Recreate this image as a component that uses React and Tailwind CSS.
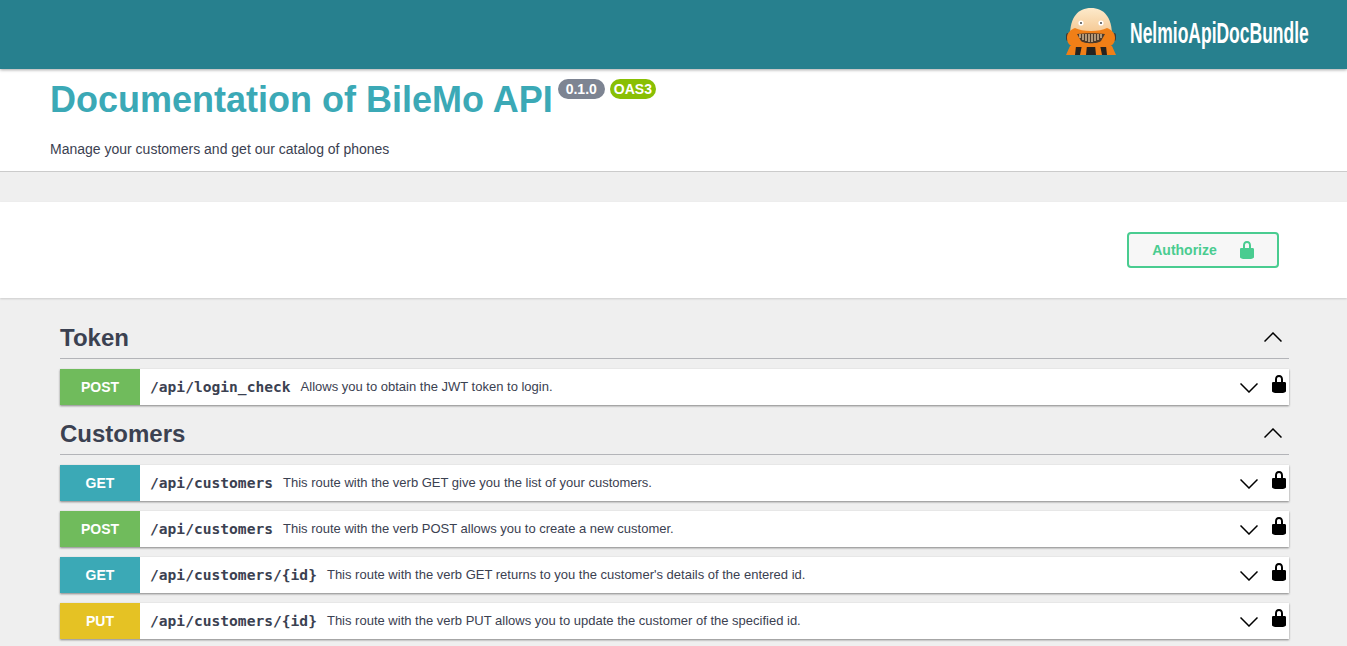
const sans = 'font-["Liberation_Sans",Arial,sans-serif]';

const methodColors = {
    GET: 'bg-[#3ba9b6]',
    POST: 'bg-[#70bb5c]',
    PUT: 'bg-[#e5c224]',
};

const tokenOps = [
    { method: 'POST', path: '/api/login_check', text: 'Allows you to obtain the JWT token to login.' },
];

const customerOps = [
    { method: 'GET', path: '/api/customers', text: 'This route with the verb GET give you the list of your customers.' },
    { method: 'POST', path: '/api/customers', text: 'This route with the verb POST allows you to create a new customer.' },
    { method: 'GET', path: '/api/customers/{id}', text: "This route with the verb GET returns to you the customer's details of the entered id." },
    { method: 'PUT', path: '/api/customers/{id}', text: 'This route with the verb PUT allows you to update the customer of the specified id.' },
];

function Lock({ className }) {
    return (
        <svg viewBox="0 0 20 20" className={className} fill="currentColor">
            <path d="M15.8 8H14V5.6C14 2.703 12.665 1 10 1 7.334 1 6 2.703 6 5.6V8H4c-.553 0-1 .646-1 1.199V17c0 .549.428 1.139.951 1.307l1.197.387C5.672 18.861 6.55 19 7.1 19h5.8c.549 0 1.428-.139 1.951-.307l1.196-.387c.524-.167.953-.757.953-1.306V9.199C17 8.646 16.352 8 15.8 8zM12 8H8V5.199C8 3.754 8.797 3 10 3s2 .754 2 2.199V8z" />
        </svg>
    );
}

function Chevron({ up, className }) {
    return (
        <svg viewBox="0 0 18 10" className={`h-[10px] w-[18px] shrink-0 ${className}`} fill="none" stroke="#000" strokeWidth="1.5">
            <polyline points={up ? '0.5,9.5 9,1 17.5,9.5' : '0.5,0.5 9,9 17.5,0.5'} />
        </svg>
    );
}

function Mascot() {
    return (
        <svg viewBox="0 0 50 47" className="mb-[6px] h-[47px] w-[50px] shrink-0">
            <defs>
                <linearGradient id="dome" x1="0" y1="0" x2="0" y2="1">
                    <stop offset="0" stopColor="#fdeacb" />
                    <stop offset="1" stopColor="#f4c48c" />
                </linearGradient>
            </defs>
            <rect x="0" y="25" width="4" height="8" rx="2" fill="#3d3a36" />
            <rect x="46" y="25" width="4" height="8" rx="2" fill="#3d3a36" />
            <path d="M4 47c1-5 3-9 8-10h26c5 1 7 5 8 10z" fill="#26231f" />
            <path d="M0 47l4-9h6l-1 9zM14 47l2-10h5l-1 10zM30 47l-1-10h5l2 10zM41 47l-1-9h6l4 9z" fill="#f07f17" />
            <path d="M4 28C4 9 12 0 25 0s21 9 21 28z" fill="url(#dome)" />
            <path d="M1 30c0-5 3-8 8-10 4 2 9 3 16 3s12-1 16-3c5 2 8 5 8 10 0 6-4 9-9 9H10C5 39 1 36 1 30z" fill="#f07f17" />
            <path d="M11 26c6-1 22-1 28 0l-4 7c-3 3-17 3-20 0z" fill="#4b3a2c" />
            <path d="M14 26v4M17 26v6M20 26v7M23 26v8M26 26v8M29 26v7M32 26v6M35 26v4" stroke="#e8c9a0" strokeWidth="1.3" />
            <circle cx="15" cy="15" r="2.6" fill="#fff" />
            <circle cx="35" cy="15" r="2.6" fill="#fff" />
            <circle cx="15" cy="15" r="0.9" fill="#333" />
            <circle cx="35" cy="15" r="0.9" fill="#333" />
        </svg>
    );
}

function Operation({ method, path, text }) {
    return (
        <div className="flex h-9 items-stretch bg-white shadow-[0_1px_2px_rgba(0,0,0,0.45)]">
            <div className={`flex w-20 shrink-0 items-center justify-center text-sm font-bold text-white ${methodColors[method]}`}>
                {method}
            </div>
            <div className="flex flex-1 items-center pl-2.5">
                <span className="font-['DejaVu_Sans_Mono',monospace] text-[14.6px] font-bold text-[#3b4151]">{path}</span>
                <span className="ml-2.5 text-[13px] text-[#3b4151]">{text}</span>
            </div>
            <Chevron className="mt-[14px] mr-[11px]" />
            <Lock className="mt-[5px] h-5 w-5 text-black" />
        </div>
    );
}

function Section({ title, ops, className }) {
    return (
        <section className={className}>
            <div className="flex h-[37px] justify-between border-b border-[#b3b4b8] pr-[7px]">
                <h2 className="text-2xl leading-[32px] font-bold text-[#3b4151]">{title}</h2>
                <Chevron up className="mt-2.5" />
            </div>
            <div className="mt-2.5 flex flex-col gap-2.5">
                {ops.map((op, index) => (
                    <Operation key={index} {...op} />
                ))}
            </div>
        </section>
    );
}

export default function App() {
    return (
        <div className={`h-[646px] overflow-hidden bg-[#efefef] ${sans}`}>
            <header className="relative z-10 flex h-[69px] items-center justify-end bg-[#27808e] pr-[37px] shadow-[0_1px_3px_rgba(0,0,0,0.35)]">
                <Mascot />
                <span className="mb-1 ml-[14px] w-[180px] origin-left scale-x-[0.583] whitespace-nowrap text-[30px] font-bold text-white">
                    NelmioApiDocBundle
                </span>
            </header>

            <div className="h-[103px] border-b border-[#cbcbcb] bg-white pl-[50px] pt-2">
                <div className="flex items-start">
                    <h1 className="text-4xl leading-[46px] font-bold text-[#3ba9b6]">Documentation of BileMo API</h1>
                    <span className="ml-[5px] mt-[2px] rounded-full bg-[#7d8492] px-2 py-px text-sm leading-[18px] font-bold text-white">0.1.0</span>
                    <span className="ml-[5px] mt-[2px] rounded-full bg-[#89bf04] px-1 py-px text-sm leading-[18px] font-bold text-white">OAS3</span>
                </div>
                <p className="mt-4 text-sm text-[#3b4151]">Manage your customers and get our catalog of phones</p>
            </div>

            <div className="mt-[30px] flex h-24 items-center justify-end bg-white pr-[68px] shadow-[0_1px_2px_rgba(0,0,0,0.15)]">
                <button className="flex h-9 w-[152px] items-center justify-center gap-5 rounded border-2 border-[#49cc90] bg-[#f7f7f7] pl-[3px] text-sm font-bold text-[#49cc90]">
                    Authorize
                    <Lock className="h-5 w-5" />
                </button>
            </div>

            <main className="pl-[60px] pr-[58px]">
                <Section title="Token" ops={tokenOps} className="mt-6" />
                <Section title="Customers" ops={customerOps} className="mt-[13px]" />
            </main>
        </div>
    );
}
